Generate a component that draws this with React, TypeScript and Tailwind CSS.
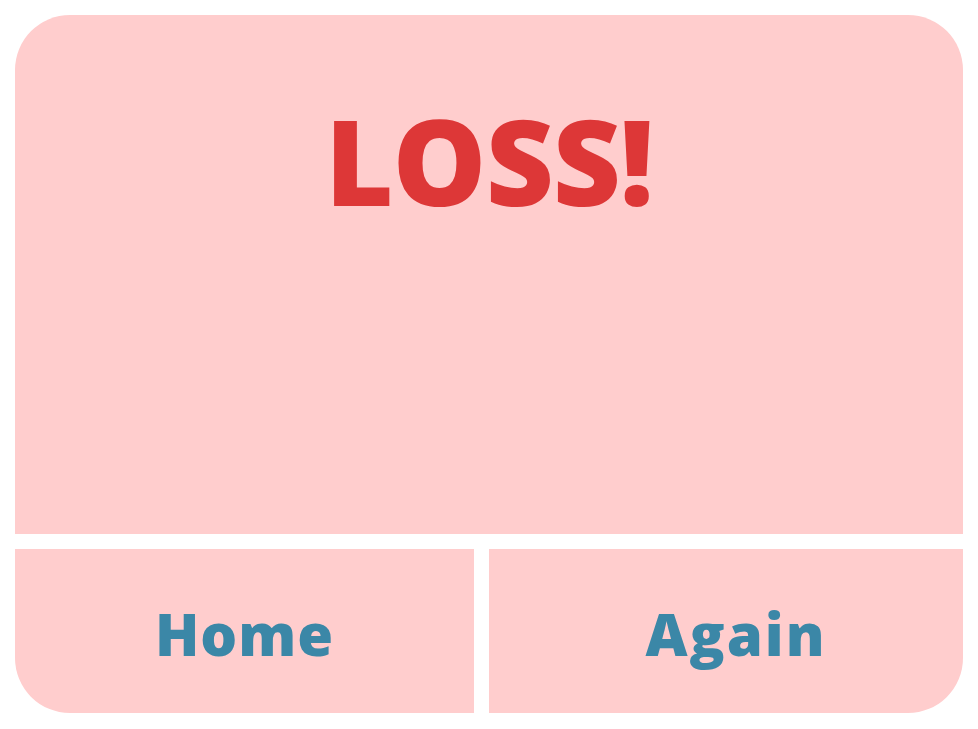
export default function App() {
  return (
    <div className="w-[978px] h-[729px] bg-white p-[15px] flex flex-col gap-[15px] font-['Open_Sans','Lato',sans-serif]">
      <div className="h-[519px] bg-[#ffcdcd] rounded-t-[55px] flex justify-center">
        <h1 className="mt-[87px] text-[118px] leading-none font-extrabold text-[#dd3737] tracking-[-1px]">LOSS!</h1>
      </div>
      <div className="h-[164px] flex gap-[15px]">
        <button className="w-[459px] bg-[#ffcdcd] rounded-bl-[55px] flex items-center justify-center pt-[4px] text-[58px] font-extrabold tracking-[1px] text-[#3b87a7]">
          Home
        </button>
        <button className="flex-1 bg-[#ffcdcd] rounded-br-[55px] flex items-center justify-center pt-[4px] pl-[20px] text-[58px] font-extrabold tracking-[2px] text-[#3b87a7]">
          Again
        </button>
      </div>
    </div>
  )
}
